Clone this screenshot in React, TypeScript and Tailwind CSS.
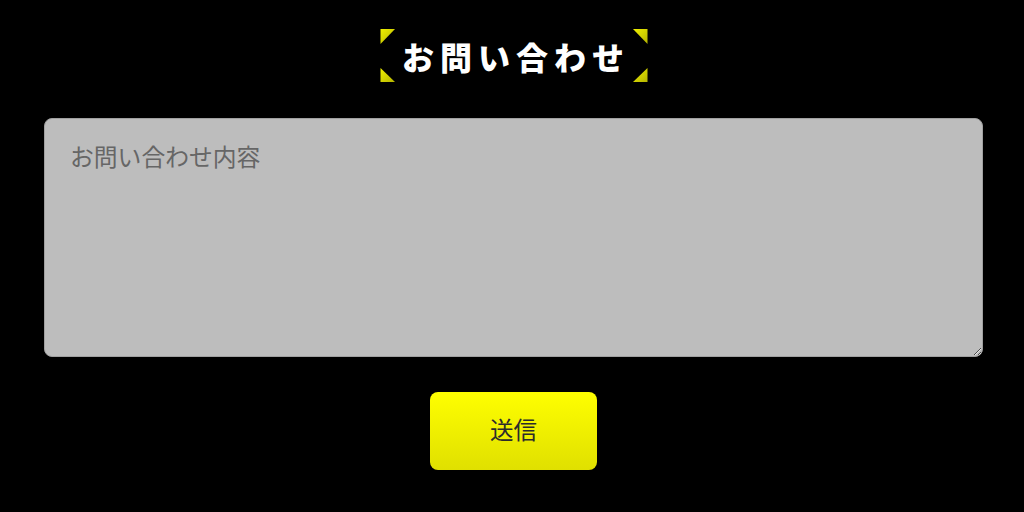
export default function App() {
  return (
    <div className="flex h-[512px] w-[1024px] flex-col items-center overflow-hidden bg-black pt-[28px] pl-[44px] pr-[41px] font-['Noto_Sans_CJK_JP',sans-serif]">
      <div className="flex h-[55px] w-[269px] items-stretch justify-between">
        <svg width="16" height="55" viewBox="0 0 16 55" className="shrink-0">
          <defs>
            <linearGradient id="y" x1="0" y1="0" x2="1" y2="1">
              <stop offset="0" stopColor="#f0f000" />
              <stop offset="1" stopColor="#b4b400" />
            </linearGradient>
          </defs>
          <polygon points="1.5,1 16,1 1.5,16" fill="url(#y)" />
          <polygon points="1.5,40 16,54 1.5,54" fill="url(#y)" />
        </svg>
        <h1 className="flex flex-1 items-center justify-center whitespace-nowrap pl-[5px] text-[32px] leading-none font-black tracking-[6px] text-white">
          お問い合わせ
        </h1>
        <svg width="16" height="55" viewBox="0 0 16 55" className="shrink-0">
          <polygon points="1,1 15.5,1 15.5,16" fill="url(#y)" />
          <polygon points="15.5,40 15.5,54 1,54" fill="url(#y)" />
        </svg>
      </div>
      <textarea
        placeholder="お問い合わせ内容"
        className="mt-[35px] block h-[239px] w-[939px] shrink-0 rounded-[8px] border border-[#a0a0a0] bg-[#bdbdbd] px-[25px] py-[19px] text-[23.8px] leading-[35px] text-[#333] outline-none placeholder:text-[#666666]"
      />
      <button className="mt-[35px] flex h-[78px] w-[167px] items-center justify-center rounded-[8px] bg-gradient-to-b from-[#ffff00] to-[#e0e000] pb-[3px] text-[23.5px] text-[#2b2b2b]">
        送信
      </button>
    </div>
  );
}
